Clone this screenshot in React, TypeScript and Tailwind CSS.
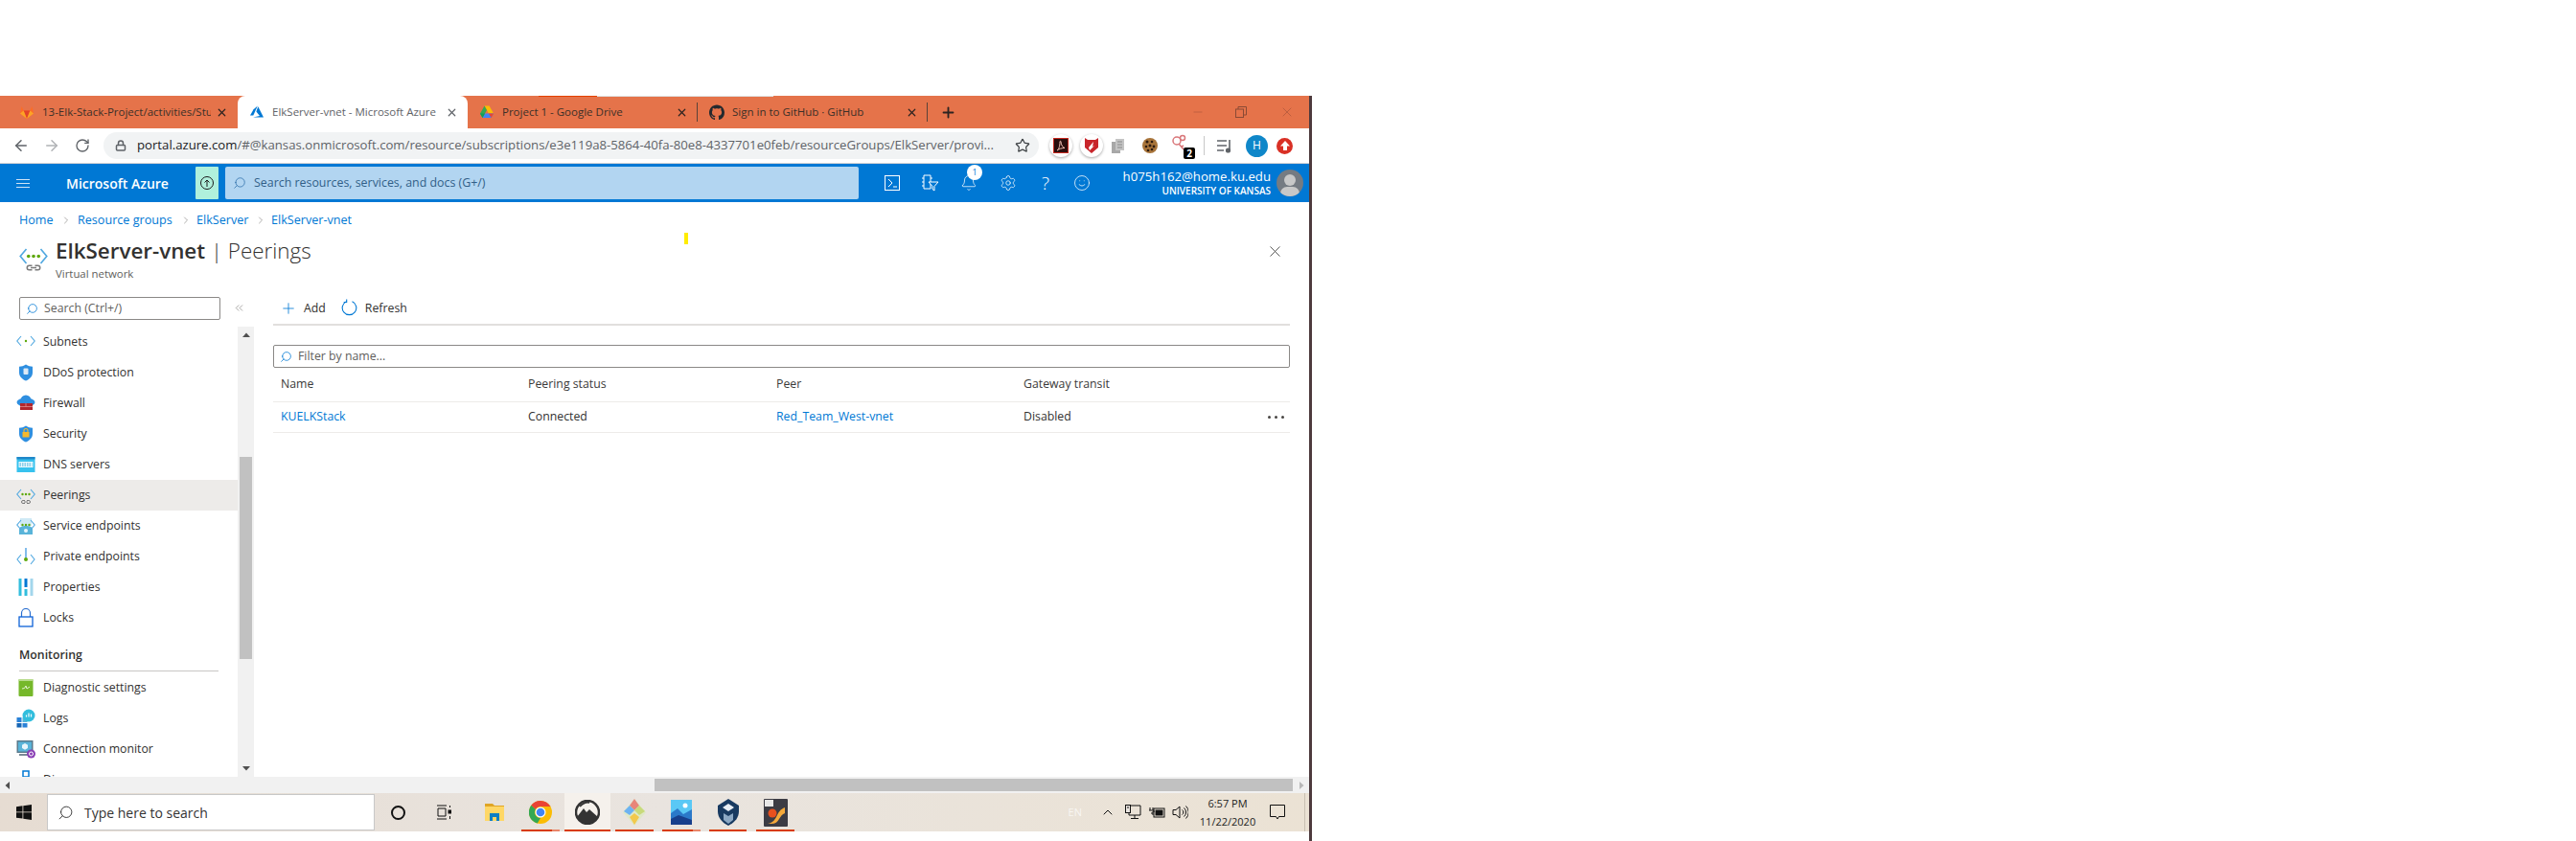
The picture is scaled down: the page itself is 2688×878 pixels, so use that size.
import React from "react";
import {
  ArrowLeft, ArrowRight, RotateCw, Lock, Star, Plus, X, Minus, Settings, Smile, Bell,
  ChevronRight, ChevronsLeft, ChevronUp, Search,
} from "lucide-react";

const Gitlab = () => (
  <svg width="16" height="16" viewBox="0 0 16 16"><path d="M8 15 1 9.6 2.6 2 4.6 6.6h6.8L13.4 2 15 9.6z" fill="#fc6d26"/><path d="M8 15 4.6 6.6h6.8z" fill="#e24329"/><path d="M1 9.6 8 15 4.6 6.6z" fill="#fca326"/><path d="M15 9.6 8 15l3.4-8.4z" fill="#fca326"/></svg>
);
const AzureLogo = ({ s = 16 }: { s?: number }) => (
  <svg width={s} height={s} viewBox="0 0 16 16"><path d="M8.8 1.5 4.6 5.2 1 11.6h3.3z" fill="#0078d4"/><path d="m9.3 2.3-1.9 5.3 3.6 4.5L4 13.4h11z" fill="#0078d4"/></svg>
);
const DriveLogo = () => (
  <svg width="16" height="16" viewBox="0 0 16 16"><path d="M5.5 1.5h5L15 9.5h-5z" fill="#fbbc04"/><path d="M5.5 1.5 1 9.5l2.5 4.5L8 6z" fill="#34a853"/><path d="M6 9.500h9L12.500 14h-9z" fill="#4285f4"/><path d="M3.500 14 6 9.500H1z" fill="#0f9d58"/><path d="m12.500 14-2.500-4.500h5z" fill="#ea4335"/></svg>
);
const GithubLogo = () => (
  <svg width="17" height="17" viewBox="0 0 16 16" fill="#24292e"><path d="M8 0C3.580 0 0 3.580 0 8c0 3.540 2.290 6.530 5.470 7.590.4.070.55-.17.55-.38 0-.19-.010-.82-.010-1.490-2.010.37-2.530-.49-2.690-.94-.09-.23-.48-.94-.82-1.130-.28-.15-.68-.52-.010-.53.630-.010 1.080.58 1.230.82.720 1.210 1.870.87 2.330.66.070-.52.280-.87.510-1.070-1.780-.2-3.640-.89-3.640-3.950 0-.87.310-1.590.820-2.150-.080-.2-.36-1.020.080-2.120 0 0 .670-.21 2.200.82.640-.18 1.320-.27 2-.27s1.360.090 2 .27c1.530-1.040 2.200-.82 2.200-.82.440 1.100.16 1.920.080 2.120.51.560.82 1.270.82 2.150 0 3.070-1.870 3.750-3.650 3.950.290.250.540.730.540 1.480 0 1.070-.010 1.930-.010 2.200 0 .210.150.460.550.380A8.010 8.010 0 0 0 16 8c0-4.420-3.580-8-8-8z"/></svg>
);

function Tab({ icon, title, active }: { icon: React.ReactNode; title: string; active?: boolean }) {
  return (
    <div className={`w-[240px] h-[34px] flex items-center pl-[12px] pr-[10px] shrink-0 ${active ? "bg-white rounded-t-[8px]" : ""}`}>
      <span className="w-4 h-4 flex items-center justify-center shrink-0">{icon}</span>
      <span className={`ml-[8px] w-[176px] overflow-hidden whitespace-nowrap text-[11.5px] ${active ? "text-[#5f6368]" : "text-[#3c3028]"}`}>{title}</span>
      <X size={13} strokeWidth={2.2} className={`ml-auto shrink-0 ${active ? "text-[#5f6368]" : "text-[#2c2320]"}`} />
    </div>
  );
}

function ExtBadge({ children }: { children: React.ReactNode }) {
  return <div className="w-[24px] h-[24px] rounded-full bg-white shadow-[0_1px_3px_rgba(0,0,0,0.35)] flex items-center justify-center">{children}</div>;
}

const Ic = ({ children }: { children: React.ReactNode }) => (
  <svg width="20" height="20" viewBox="0 0 20 20">{children}</svg>
);

const Vnet = ({ link, dots = 3, s = 20 }: { link?: boolean; dots?: number; s?: number }) => (
  <svg width={s} height={s} viewBox="0 0 20 20" fill="none">
    <path d="M5 4 .8 9 5 14M15 4l4.200 5L15 14" stroke="#50a8e0" strokeWidth="1.100"/>
    {dots === 3 ? <g fill="#5ea80b"><circle cx="6.500" cy="9" r="1.200"/><circle cx="10" cy="9" r="1.200"/><circle cx="13.500" cy="9" r="1.200"/></g> : <circle cx="10" cy="9" r="1.200" fill="#5ea80b"/>}
    {link && <path d="M9 15.500H7a1.500 1.500 0 0 0 0 3h2M11 15.500h2a1.500 1.500 0 0 1 0 3h-2M8 17h4" stroke="#7a7a7a" strokeWidth="1"/>}
  </svg>
);

const Shield = ({ inner }: { inner: React.ReactNode }) => (
  <Ic>
    <path d="M10 1.500c2.500 1.800 4.500 2 7 2.200v6.300c0 4.200-3.500 7-7 8.500-3.500-1.500-7-4.300-7-8.500V3.700c2.500-.2 4.500-.4 7-2.200z" fill="#2f8fe0"/>
    {inner}
  </Ic>
);

const menu: { label: string; icon: React.ReactNode; sel?: boolean }[] = [
  { label: "Subnets", icon: <Vnet dots={1} /> },
  { label: "DDoS protection", icon: <Shield inner={<rect x="7.500" y="5.500" width="5" height="6.500" rx="1" fill="#dceaf6" />} /> },
  { label: "Firewall", icon: <Ic><ellipse cx="10" cy="9" rx="9.500" ry="4.500" fill="#2f8fe0"/><circle cx="10" cy="7" r="5.500" fill="#2f8fe0"/><rect x="4" y="10" width="13" height="7" fill="#b3262c"/><path d="M4 13.500h13M10 10v3.500" stroke="#e79a9a" strokeWidth=".7"/></Ic> },
  { label: "Security", icon: <Shield inner={<><path d="M8 8V6.500a2 2 0 0 1 4 0V8" stroke="#f5b82e" fill="none" strokeWidth="1.100"/><rect x="6.500" y="8" width="7" height="5.500" fill="#f5b82e"/></>} /> },
  { label: "DNS servers", icon: <Ic><rect x="0.500" y="2" width="19" height="16" fill="#37c2ee"/><rect x="0.500" y="2" width="19" height="2.500" fill="#1f87c9"/><rect x="2.500" y="7" width="15" height="6" fill="#e7f8fd"/><path d="M3.500 9h13M3.500 11h13" stroke="#37a7d8" strokeWidth="1" strokeDasharray="1.500 1"/></Ic> },
  { label: "Peerings", icon: <Vnet link />, sel: true },
  { label: "Service endpoints", icon: <Ic><path d="M3 14c0-3 2.500-4 7-4s7 1 7 4v5H3z" fill="#59b4d9"/><rect x="4" y="2" width="12" height="8" fill="#cfe9f5"/><Vnet /><circle cx="10" cy="15" r="2" fill="#e8f5fb"/></Ic> },
  { label: "Private endpoints", icon: <Ic><path d="M5 8 1 13l4 5M15 8l4 5-4 5" stroke="#50a8e0" strokeWidth="1.100" fill="none"/><path d="M10 1v12" stroke="#2f8fe0" strokeWidth="1.200"/><circle cx="10" cy="13" r="2" fill="#5ea80b"/></Ic> },
  { label: "Properties", icon: <Ic><rect x="2.500" y="1" width="3" height="18" fill="#32bedd"/><rect x="8.500" y="1" width="3" height="9" fill="#0078d4"/><rect x="8.500" y="12" width="3" height="7" fill="#32bedd"/><rect x="14.500" y="1" width="3" height="18" fill="#a3d6ec"/></Ic> },
  { label: "Locks", icon: <Ic><path d="M5.500 9V5a4.500 4.500 0 0 1 9 0v4" stroke="#2a6fd0" strokeWidth="1.200" fill="none"/><rect x="3" y="9" width="14" height="10" fill="white" stroke="#0d62d8" strokeWidth="1.300"/></Ic> },
];
const menu2: { label: string; icon: React.ReactNode }[] = [
  { label: "Diagnostic settings", icon: <Ic><rect x="2.500" y="1" width="15" height="18" rx="1" fill="#76b82a"/><rect x="2.500" y="1" width="15" height="2" fill="#b8dc8c"/><path d="m6 11 2.500-.5L10 8l1 3 3-2" stroke="#e4f3d2" strokeWidth="1" fill="none"/></Ic> },
  { label: "Logs", icon: <Ic><rect x="0.500" y="9" width="5" height="5" fill="#2a82d8"/><rect x="0.500" y="15" width="5" height="4.500" fill="#1766b5"/><rect x="6.500" y="15" width="5" height="4.500" fill="#2a82d8"/><rect x="6.500" y="9" width="5" height="5" fill="#59b4d9"/><circle cx="13" cy="7" r="6.500" fill="#32bedd"/><path d="M10.500 8.500v-2M13 8.500v-4M15.500 8.500v-3" stroke="white" strokeWidth="1.200"/></Ic> },
  { label: "Connection monitor", icon: <Ic><rect x="0.500" y="1" width="17" height="13" fill="#5a7a8c"/><rect x="2" y="2.500" width="14" height="10" fill="#59b4d9"/><path d="m9 4 3 1.700v3.300L9 10.700 6 9V5.700z" fill="#e8f5fb"/><rect x="3" y="15" width="11" height="2" fill="#7a8a96"/><circle cx="15.500" cy="15" r="4.500" fill="#8a3fb5"/><circle cx="15.500" cy="15" r="2" fill="none" stroke="white" strokeWidth="1"/></Ic> },
  { label: "Diagram", icon: <Ic><rect x="7" y="1" width="6" height="6" fill="white" stroke="#0078d4" strokeWidth="1.500"/></Ic> },
];

function MenuItem({ label, icon, sel }: { label: string; icon: React.ReactNode; sel?: boolean }) {
  return (
    <div className={`h-8 shrink-0 flex items-center pl-[17px] ${sel ? "bg-[#edebe9]" : ""}`}>
      <span className="w-5 h-5 flex items-center justify-center shrink-0">{icon}</span>
      <span className="ml-[8px] text-[12.3px] text-[#323130] whitespace-nowrap">{label}</span>
    </div>
  );
}

const Tri = ({ d, cls }: { d: string; cls: string }) => (
  <svg width="10" height="10" viewBox="0 0 10 10" className={cls}><path d={d} fill="currentColor" /></svg>
);

function Under({ children, w, tint, active }: { children: React.ReactNode; w: number; tint?: boolean; active?: boolean }) {
  return (
    <div style={{ width: w }} className={`relative h-[40px] shrink-0 flex items-center justify-center ${active ? "bg-[#f5f1ec]" : ""}`}>
      {children}
      <div className="absolute bottom-0 left-0 right-0 h-[2px] flex">
        <div className="flex-1 bg-[#d83b01]" />
        {tint && <div className="w-[8px] bg-[#e8866a]" />}
      </div>
    </div>
  );
}

export default function App() {
  return (
    <div className="w-[2688px] h-[878px] bg-white overflow-hidden font-['Open_Sans',sans-serif]">
      <div className="w-[1369px] h-[778px] mt-[100px] border-r-[3px] border-[#4d3a3d] flex flex-col">
        {/* Tab strip */}
        <div className="relative h-[34px] bg-[#e5734a] flex items-center pl-[8px] shrink-0">
          <div className="absolute left-[562px] top-0 w-[61px] h-px bg-[#e54100]" />
          <div className="absolute left-[623px] top-0 w-[184px] h-px bg-[#e0e0e0]" />
          <Tab icon={<Gitlab />} title="13-Elk-Stack-Project/activities/Stu" />
          <Tab active icon={<AzureLogo />} title="ElkServer-vnet - Microsoft Azure" />
          <Tab icon={<DriveLogo />} title="Project 1 - Google Drive" />
          <div className="w-px h-[20px] bg-[#5a4238] -ml-px shrink-0" />
          <Tab icon={<GithubLogo />} title="Sign in to GitHub · GitHub" />
          <div className="w-px h-[20px] bg-[#5a4238] -ml-px shrink-0" />
          <Plus size={17} strokeWidth={2.6} className="ml-[13px] text-[#2c2320]" />
          <div className="ml-auto flex items-center text-[#a8533a]">
            <Minus size={14} strokeWidth={1} className="mr-[32px]" />
            <svg width="12" height="12" viewBox="0 0 12 12" fill="none" stroke="#8a4a35" className="mr-[34px]"><rect x=".5" y="3" width="8" height="8.500"/><path d="M3 3V.5h8.500V9H8.500"/></svg>
            <X size={16} strokeWidth={1} className="mr-[15px]" />
          </div>
        </div>
        {/* Toolbar */}
        <div className="h-[37px] shrink-0 bg-white border-b border-[#d5d5d5] flex items-center text-[#5f6368]">
          <ArrowLeft size={18} strokeWidth={2} className="ml-[13px]" />
          <ArrowRight size={18} strokeWidth={2} className="ml-[14px] text-[#b0b2b5]" />
          <RotateCw size={16} strokeWidth={2} className="ml-[15px]" />
          <div className="ml-[14px] w-[976px] h-[28px] rounded-full bg-[#f1f3f4] flex items-center shrink-0">
            <Lock size={12} strokeWidth={3} className="ml-[12px] text-[#5f6368]" />
            <span className="ml-[11px] w-[905px] whitespace-nowrap overflow-hidden text-[13.18px] text-[#5f6368]"><span className="text-[#202124]">portal.azure.com</span>/#@kansas.onmicrosoft.com/resource/subscriptions/e3e119a8-5864-40fa-80e8-4337701e0feb/resourceGroups/ElkServer/provi...</span>
            <Star size={16} strokeWidth={1.8} className="ml-auto mr-[9px] text-[#3c4043]" />
          </div>
          <div className="ml-[11px] flex items-center">
            <ExtBadge><div className="w-[16px] h-[16px] bg-[#2a0d0d] border border-[#c8281e] flex items-center justify-center text-[#f3c1b5]"><svg width="10" height="12" viewBox="0 0 10 12" fill="none" stroke="currentColor"><path d="M1 11c2-1 3-5 3-9 0-1 1-1 1 0 0 3 2 6 4 6.500-3 0-6 1-8 2.500z"/></svg></div></ExtBadge>
            <div className="ml-[8px]"><ExtBadge><svg width="16" height="18" viewBox="0 0 16 18"><path d="M1 1l3 2h8l3-2v10l-7 6-7-6z" fill="#c8252b"/><path d="m5 11 5-6-1 5 2-1-5 5z" fill="white"/></svg></ExtBadge></div>
            <svg width="18" height="18" viewBox="0 0 18 18" className="ml-[7px]"><rect x="2" y="5" width="9" height="12" fill="#a8a8a8"/><rect x="6" y="2" width="9" height="12" fill="#c4c4c4"/><path d="M8 5h5M8 8h5M8 11h5" stroke="#8a8a8a"/></svg>
            <svg width="18" height="18" viewBox="0 0 18 18" className="ml-[15px]"><circle cx="9" cy="9" r="8" fill="#a8743a"/><g fill="#2e1c10"><circle cx="6" cy="5" r="1.500"/><circle cx="11" cy="5" r="1.300"/><circle cx="5" cy="10" r="1.300"/><circle cx="9" cy="9" r="1.500"/><circle cx="13" cy="10" r="1.400"/><circle cx="7" cy="14" r="1.300"/><circle cx="11" cy="13" r="1.300"/></g></svg>
            <div className="relative ml-[13px] w-[20px] h-[24px]">
              <svg width="18" height="18" viewBox="0 0 18 18" fill="none" stroke="#d9777a" strokeWidth="1.500"><circle cx="6" cy="7" r="4"/><circle cx="12" cy="4" r="2.500"/><path d="m8 10 5 6M11 13l2-1"/></svg>
              <div className="absolute right-[-5px] bottom-[-2px] w-[12px] h-[12px] bg-black rounded-[2px] text-white text-[10px] leading-[12px] font-bold text-center">2</div>
            </div>
            <div className="ml-[14px] w-px h-[20px] bg-[#c8c8c8]" />
            <svg width="18" height="18" viewBox="0 0 18 18" fill="none" stroke="#5f6368" strokeWidth="1.600" className="ml-[12px]"><path d="M1 4h10M1 9h10M1 14h7"/><path d="M14 3v11"/><circle cx="12.500" cy="14" r="1.800" fill="#5f6368"/></svg>
            <div className="ml-[13px] w-[23px] h-[23px] rounded-full bg-[#0f87c9] text-white text-[12px] flex items-center justify-center">H</div>
            <div className="ml-[9px] w-[17px] h-[17px] rounded-full bg-[#d93025] flex items-center justify-center"><svg width="10" height="10" viewBox="0 0 10 10" fill="white"><path d="M5 0 10 5.500H7V10H3V5.500H0z"/></svg></div>
          </div>
        </div>
        {/* Azure bar */}
        <div className="h-[40px] shrink-0 bg-[#0078d4] flex items-center text-white">
          <div className="ml-[17px] w-[14px] flex flex-col gap-[3px]"><div className="h-px bg-[#cfe4f6]" /><div className="h-px bg-[#cfe4f6]" /><div className="h-px bg-[#cfe4f6]" /></div>
          <span className="ml-[38px] w-[135px] text-[14px] font-semibold whitespace-nowrap">Microsoft Azure</span>
          <div className="w-[24px] h-[34px] bg-[#b0f0dc] rounded-[1px] flex items-center justify-center shrink-0">
            <svg width="16" height="16" viewBox="0 0 16 16" fill="none" stroke="#1b1b1b"><circle cx="8" cy="8" r="6.500"/><path d="M8 12V5M5.500 7.500 8 5l2.500 2.500"/></svg>
          </div>
          <div className="ml-[7px] w-[661px] h-[34px] bg-[#b2d5f1] rounded-[2px] flex items-center text-[#2a6da8] shrink-0">
            <Search size={14} strokeWidth={1.3} className="ml-[8px] -scale-x-100" />
            <span className="ml-[8px] text-[12.4px] whitespace-nowrap text-[#315f88]">Search resources, services, and docs (G+/)</span>
          </div>
          <svg width="17" height="17" viewBox="0 0 17 17" fill="none" stroke="white" className="ml-[27px] shrink-0"><rect x=".5" y=".5" width="15" height="15"/><path d="m4 4 4 4-4 4M9 12h4"/></svg>
          <svg width="20" height="20" viewBox="0 0 20 20" fill="none" stroke="white" className="ml-[21px] shrink-0"><path d="M3 2h7v14H3zM3 5H1M3 9H1M3 13H1M10 5h2"/><path d="M8 9h10l-4 4.500V18l-2-1.500v-3z" fill="#0078d4"/></svg>
          <div className="relative ml-[21px] shrink-0">
            <Bell size={18} strokeWidth={1} />
            <div className="absolute -top-[10px] left-[7px] w-[16px] h-[16px] rounded-full bg-white text-[#0078d4] text-[9px] leading-[16px] text-center">1</div>
          </div>
          <Settings size={18} strokeWidth={1} className="ml-[23px] shrink-0" />
          <span className="ml-[21px] w-[18px] text-[19px] leading-none font-light text-center shrink-0">?</span>
          <Smile size={18} strokeWidth={1} className="ml-[20px] shrink-0" />
          <div className="ml-auto flex flex-col items-end mr-[6px]">
            <span className="text-[13.2px] leading-[16px] whitespace-nowrap">h075h162@home.ku.edu</span>
            <span className="text-[10px] leading-[14px] font-semibold whitespace-nowrap">UNIVERSITY OF KANSAS</span>
          </div>
          <div className="mr-[6px] w-[28px] h-[28px] rounded-full bg-[#757b82] overflow-hidden relative shrink-0">
            <div className="absolute left-[8px] top-[5px] w-[12px] h-[12px] rounded-full bg-[#c8c8c8]" />
            <div className="absolute left-[4px] top-[18px] w-[20px] h-[14px] rounded-full bg-[#c8c8c8]" />
          </div>
        </div>
        {/* Content */}
        <div className="h-[600px] shrink-0 flex flex-col overflow-hidden relative">
          <div className="absolute left-[714px] top-[32px] w-[4px] h-[12px] bg-[#ffec00]" />
          <div className="h-[99px] shrink-0 pl-[20px] pt-[10px] pr-[26px]">
            <div className="flex items-center h-[18px] text-[12.6px] text-[#0078d4] whitespace-nowrap">
              <span className="w-[37px]">Home</span>
              <ChevronRight size={12} strokeWidth={1} className="mx-[6px] text-[#605e5c]" />
              <span className="w-[102px]">Resource groups</span>
              <ChevronRight size={12} strokeWidth={1} className="ml-[5px] mr-[5px] text-[#605e5c]" />
              <span className="w-[56px]">ElkServer</span>
              <ChevronRight size={12} strokeWidth={1} className="mx-[5px] text-[#605e5c]" />
              <span>ElkServer-vnet</span>
            </div>
            <div className="flex mt-[8px]">
              <div className="w-[38px] pt-[7px] shrink-0"><Vnet link s={30} /></div>
              <div className="flex flex-col">
                <div className="text-[22.4px] leading-[30px] text-[#323130] whitespace-nowrap"><span className="font-semibold">ElkServer-vnet</span><span className="font-light"> | Peerings</span></div>
                <div className="text-[11.4px] leading-[14px] mt-[2px] text-[#605e5c]">Virtual network</div>
              </div>
              <X size={19} strokeWidth={1} className="ml-auto mt-[6px] text-[#323130]" />
            </div>
          </div>
          <div className="flex-1 flex min-h-0">
            {/* Sidebar */}
            <div className="w-[265px] shrink-0 flex flex-col">
              <div className="h-[31px] shrink-0 flex items-start pl-[20px]">
                <div className="w-[210px] h-[24px] border border-[#8a8886] rounded-[2px] flex items-center">
                  <Search size={13} strokeWidth={1.4} className="ml-[6px] -scale-x-100 text-[#0078d4]" />
                  <span className="ml-[6px] text-[12.3px] text-[#605e5c]">Search (Ctrl+/)</span>
                </div>
                <ChevronsLeft size={13} strokeWidth={1} className="ml-[13px] mt-[5px] text-[#605e5c]" />
              </div>
              <div className="flex-1 flex min-h-0">
                <div className="w-[248px] shrink-0 flex flex-col overflow-hidden">
                  {menu.map((m) => <MenuItem key={m.label} {...m} />)}
                  <div className="shrink-0 mx-[20px] pt-[15px] pb-[8px] mb-px border-b border-[#c8c6c4] text-[12.3px] leading-[16px] font-semibold text-[#323130]">Monitoring</div>
                  {menu2.map((m) => <MenuItem key={m.label} {...m} />)}
                </div>
                <div className="w-[17px] shrink-0 bg-[#f1f1f1] flex flex-col items-center relative text-[#505050]">
                  <Tri d="M5 2.500 9 7H1z" cls="mt-[4px]" />
                  <div className="w-[13px] h-[211px] bg-[#c1c1c1] mt-[122px]" />
                  <Tri d="M1 3h8L5 7.500z" cls="mt-auto mb-[4px]" />
                </div>
              </div>
            </div>
            {/* Main */}
            <div className="flex-1 min-w-0 pl-[20px] pr-[20px] flex flex-col">
              <div className="h-[30px] shrink-0 border-b-2 border-[#e1dfdd] flex items-start text-[12.3px] text-[#323130]">
                <Plus size={18} strokeWidth={1.1} className="ml-[7px] mt-[3px] text-[#0078d4]" />
                <span className="ml-[7px] mt-[3px]">Add</span>
                <svg width="17" height="18" viewBox="0 0 17 18" fill="none" stroke="#0078d4" strokeWidth="1.100" className="ml-[16px] mt-[2px]"><path d="M5.500 2.700A7.300 7.300 0 1 0 11.500 2.700"/><path d="M5.700 .5v3H2.700"/></svg>
                <span className="ml-[8px] mt-[3px]">Refresh</span>
              </div>
              <div className="mt-[20px] h-[24px] shrink-0 border border-[#8a8886] rounded-[2px] flex items-center">
                <Search size={13} strokeWidth={1.4} className="ml-[6px] -scale-x-100 text-[#0078d4]" />
                <span className="ml-[6px] text-[12.3px] text-[#605e5c]">Filter by name...</span>
              </div>
              <div className="h-[36px] shrink-0 grid grid-cols-[258px_259px_258px_1fr] items-center border-b border-[#edebe9] pl-[8px] text-[12.3px] font-medium text-[#3b3a39]">
                <span>Name</span><span>Peering status</span><span>Peer</span><span>Gateway transit</span>
              </div>
              <div className="h-[32px] shrink-0 grid grid-cols-[258px_259px_258px_1fr] items-center border-b border-[#edebe9] pl-[8px] text-[12.3px] text-[#323130]">
                <span className="text-[#0078d4]">KUELKStack</span>
                <span>Connected</span>
                <span className="text-[#0078d4]">Red_Team_West-vnet</span>
                <div className="flex items-center justify-between pr-[6px]">
                  <span>Disabled</span>
                  <div className="flex gap-[4px]"><div className="w-[3px] h-[3px] rounded-full bg-[#484644]" /><div className="w-[3px] h-[3px] rounded-full bg-[#484644]" /><div className="w-[3px] h-[3px] rounded-full bg-[#484644]" /></div>
                </div>
              </div>
            </div>
          </div>
        </div>
        {/* Horizontal scrollbar */}
        <div className="h-[17px] shrink-0 bg-[#f1f1f1] flex items-center text-[#505050] pl-[3px] pr-[3px]">
          <Tri d="M2.500 5 7 1v8z" cls="" />
          <div className="ml-[670px] w-[666px] h-[13px] bg-[#c1c1c1]" />
          <Tri d="M3 1l4.500 4L3 9z" cls="ml-[4px] text-[#b8b8b8]" />
        </div>
        {/* Taskbar */}
        <div className="h-[40px] shrink-0 bg-gradient-to-r from-[#e6dcd2] via-[#e9e4df] to-[#ebe2d4] flex items-center">
          <div className="w-[49px] h-[40px] flex items-center justify-center shrink-0">
            <svg width="16" height="16" viewBox="0 0 16 16" fill="#111"><path d="M0 2.200 6.500 1.300v6.200H0zM7.300 1.200 16 0v7.500H7.300zM0 8.300h6.500v6.300L0 13.700zM7.300 8.300H16V16l-8.700-1.200z"/></svg>
          </div>
          <div className="w-[342px] h-[38px] bg-white border border-[#c8c8c8] flex items-center shrink-0">
            <Search size={17} strokeWidth={1.2} className="ml-[10px] -scale-x-100 text-[#222]" />
            <span className="ml-[11px] text-[14px] text-[#333]">Type here to search</span>
          </div>
          <div className="ml-[17px] w-[15px] h-[15px] rounded-full border-[2.500px] border-[#111] shrink-0" />
          <svg width="16" height="16" viewBox="0 0 16 16" fill="none" stroke="#111" className="ml-[32px] shrink-0"><path d="M1 1h10M1 15h10M2 4h8v8H2zM14.500 1v2M14.500 12v3"/><rect x="13" y="6" width="3" height="3" fill="#111"/></svg>
          <div className="ml-[35px] flex items-center shrink-0">
            <div className="w-[44px] h-[40px] flex items-center justify-center -ml-[12px]">
              <svg width="22" height="20" viewBox="0 0 22 20"><path d="M1 1h8l2 2h10v2H1z" fill="#e0a526"/><rect x="1" y="4" width="20" height="15" fill="#ffd766"/><path d="M6 19v-8h10v8h-3v-4H9v4z" fill="#0f7fc4"/></svg>
            </div>
            <div className="w-[6px]" />
            <Under w={40} tint><svg width="24" height="24" viewBox="0 0 24 24"><circle cx="12" cy="12" r="12" fill="#fbbc04"/><path d="M12 0a12 12 0 0 1 10.400 6H12a6 6 0 0 0-5.200 3L2.300 4.700A12 12 0 0 1 12 0z" fill="#ea4335"/><path d="M2.300 4.700 6.800 9a6 6 0 0 0 5.200 9l-3.200 5.600A12 12 0 0 1 2.300 4.700z" fill="#34a853"/><circle cx="12" cy="12" r="5.500" fill="#fff"/><circle cx="12" cy="12" r="4.300" fill="#4285f4"/></svg></Under>
            <div className="w-[5px]" />
            <Under w={48} active><svg width="26" height="26" viewBox="0 0 26 26"><circle cx="13" cy="13" r="12" fill="none" stroke="#333" strokeWidth="2.500"/><path d="M2 18 9 9l3 4 3-3 9 8a12 12 0 0 1-22 0z" fill="#333"/><path d="M5 7c3-4 8-5 10-4" stroke="#333" strokeWidth="2" fill="none"/></svg></Under>
            <div className="w-[5px]" />
            <Under w={40}><svg width="26" height="30" viewBox="0 0 26 30"><path d="M13 1 25 15 13 29 1 15z" fill="#dfe8c8"/><path d="M13 1l5 7-5 5-5-5z" fill="#e8857a"/><path d="M8 8 13 13 8 18 2 14z" fill="#6db3f2"/><path d="M18 8l6 6-6 4-5-5z" fill="#c8da7a"/><path d="m13 16 5 4-5 8-5-8z" fill="#f2c94c"/></svg></Under>
            <div className="w-[9px]" />
            <Under w={40} tint><svg width="22" height="26" viewBox="0 0 22 26"><rect width="22" height="26" fill="#5ac8f5"/><path d="M0 14 7 9l6 6 9-5v16H0z" fill="#2b79c9"/><path d="M0 20l8-4 14 5v5H0z" fill="#173f8c"/><circle cx="15" cy="6" r="2.500" fill="#fff"/></svg></Under>
            <div className="w-[9px]" />
            <Under w={39}><svg width="24" height="30" viewBox="0 0 24 30"><path d="M12 1 23 8v6c0 7-5 12-11 15C6 26 1 21 1 14V8z" fill="#183a61"/><path d="M12 6 18 10 12 14 6 10z" fill="#e8eef5"/><path d="M7 16l5 3v8l-5-4zM17 16l-5 3v8l5-4z" fill="#8ba8c4"/></svg></Under>
            <div className="w-[10px]" />
            <Under w={40}><svg width="25" height="29" viewBox="0 0 25 29"><rect width="25" height="29" rx="1" fill="#3c3c44"/><rect x="1" y="1" width="9" height="7" fill="#e8e8e8"/><circle cx="9" cy="15" r="4.500" fill="#e8501e"/><path d="M4 26c6-1 8-5 10-9 1.500-3 3-6 8-8v6c-3 1-4 3-6 6-1.500 3-4 5-8 5z" fill="#f5a93a"/></svg></Under>
          </div>
          <div className="ml-auto flex items-center h-[40px] shrink-0">
            <span className="text-[11px] text-white/70 mr-[19px]">EN</span>
            <ChevronUp size={16} strokeWidth={1.500} className="text-[#111] mr-[10px]" />
            <svg width="17" height="16" viewBox="0 0 17 16" fill="none" stroke="#111" className="mr-[8px]"><path d="M4 1h12v10H4zM10 11v3M6 14.500h8"/><rect x=".5" y=".5" width="5" height="8" fill="#e9e4df"/><path d="M2 3h2"/></svg>
            <svg width="17" height="13" viewBox="0 0 17 13" fill="#111" className="mr-[7px]"><path d="M1 1v3M4 1v3M0 4h5v2H3v2h2" stroke="#111" fill="none"/><rect x="5" y="2" width="11" height="9" fill="none" stroke="#111"/><rect x="6.500" y="3.500" width="8" height="6"/></svg>
            <svg width="17" height="16" viewBox="0 0 17 16" fill="none" stroke="#111" className="mr-[10px]"><path d="M1 5.500h3L8 2v12L4 10.500H1zM10.500 5.500a3 3 0 0 1 0 5M12.500 3.500a6 6 0 0 1 0 9M14.500 1.500a9 9 0 0 1 0 13"/></svg>
            <div className="w-[62px] flex flex-col items-center text-[11px] leading-[19px] text-[#222] mr-[12px]">
              <span>6:57 PM</span>
              <span>11/22/2020</span>
            </div>
            <svg width="18" height="18" viewBox="0 0 18 18" fill="none" stroke="#111" className="mr-[19px]"><path d="M1.500 1.500h15v12h-6l-1.500 2.500L7.500 13.500h-6z"/></svg>
            <div className="w-px h-[40px] bg-[#c9bfb2] mr-[4px]" />
          </div>
        </div>
      </div>
    </div>
  );
}
